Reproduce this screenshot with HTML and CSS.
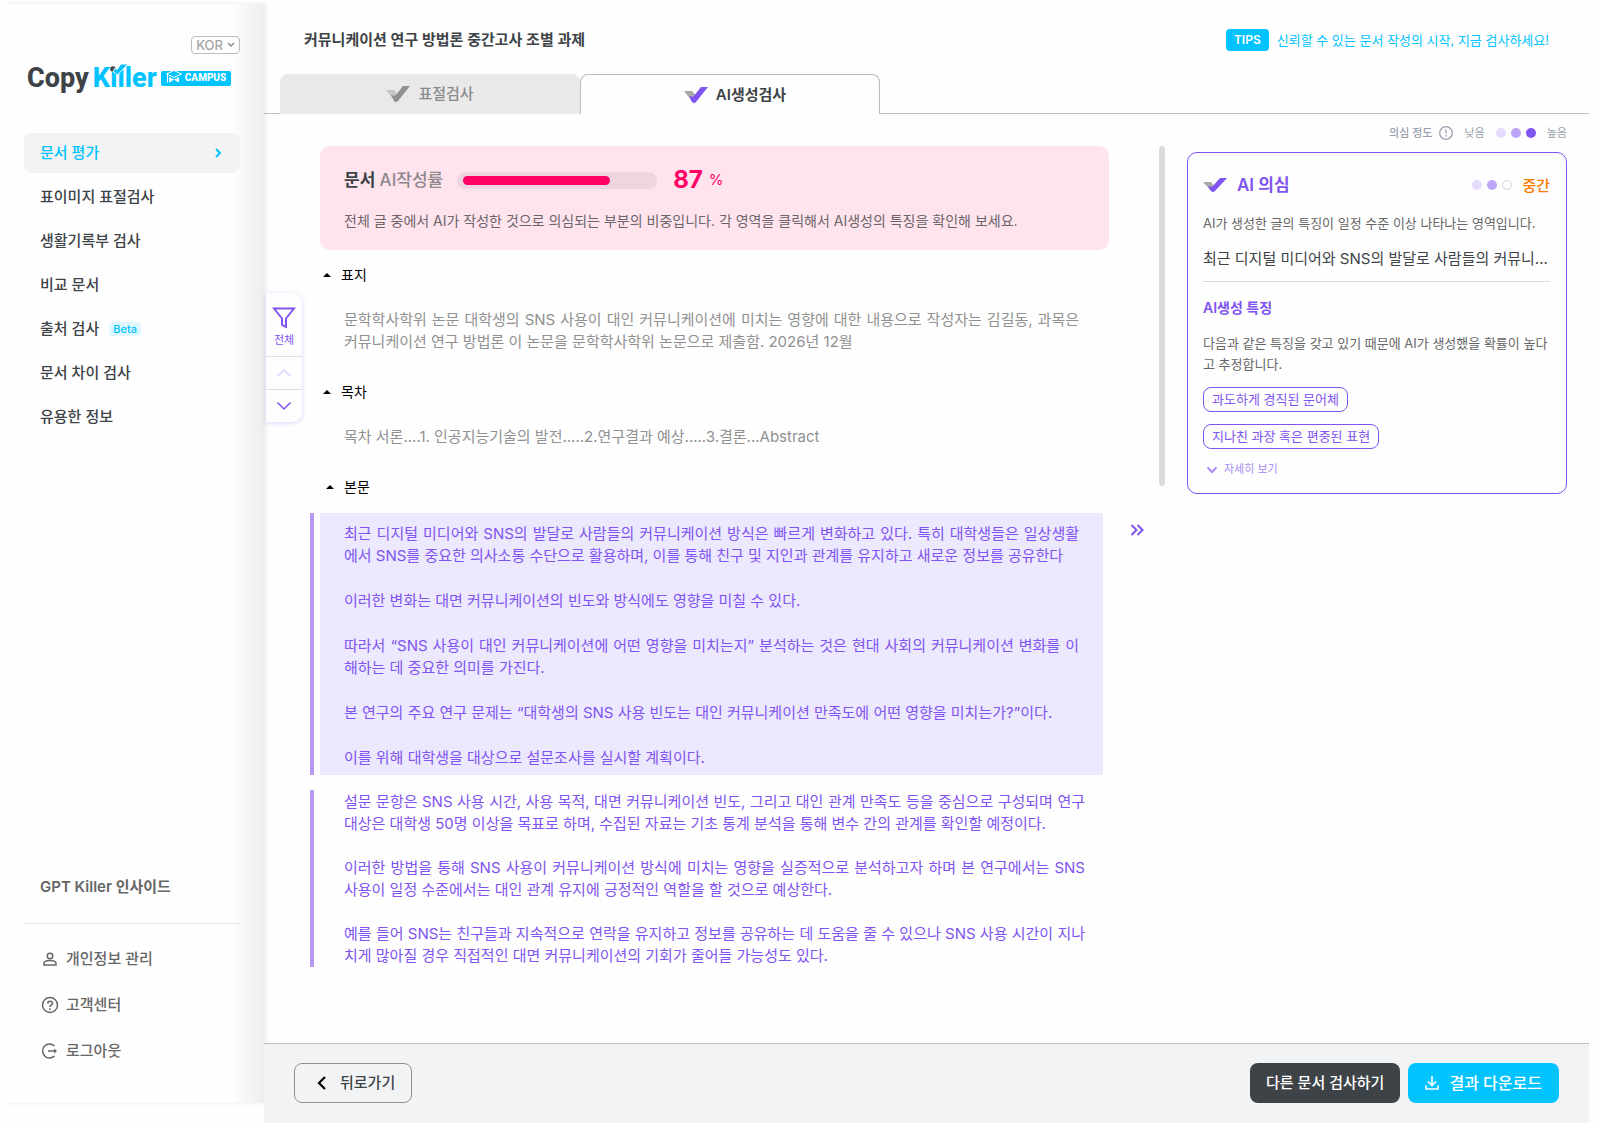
FILE: index.html
```
<!DOCTYPE html>
<html lang="ko">
<head>
    <meta charset="UTF-8">
    <meta name="viewport" content="width=device-width, initial-scale=1.0">
    <title>CopyKiller Campus - AI생성검사</title>
    <link rel="stylesheet" href="styles.css">
</head>
<body>
    <div class="app">
        <aside class="sidebar">
            <div class="lang-row">
                <button type="button" class="lang">KOR
                    <svg width="8" height="6" viewBox="0 0 8 6"><path d="M1 1l3 3 3-3" fill="none" stroke="#8b8b8d" stroke-width="1.5"/></svg>
                </button>
            </div>
            <a href="#" class="logo">
                <span class="logo-copy">Copy</span>
                <span class="logo-killer">Kıller
                    <svg class="logo-check" width="20" height="15" viewBox="0 0 20 15"><circle cx="4" cy="6" r="2.8" fill="#3d4347"/><path d="M4 8.500l4.500 3.500L19 1h-7L8 6.500 6 5z" fill="#00c3ff" stroke="#fefefe" stroke-width="1"/></svg>
                </span>
                <span class="logo-campus">
                    <svg width="16" height="18" viewBox="0 0 16 18"><path d="M8 1.500L15.500 5 8 8.500.5 5z" fill="#00c3ff" stroke="#fff"/><path d="M3 8l5 2.500L13 8v5.500l-3-1.500-2-1.500L6 12l-3 1.500z" fill="#fff"/><path d="M1.500 6v7.500" stroke="#fff"/></svg>
                    CAMPUS
                </span>
            </a>

            <nav class="menu">
                <a href="#" class="active">문서 평가
                    <svg width="7" height="10" viewBox="0 0 7 10"><path d="M1 1l4 4-4 4" fill="none" stroke="#00c3ff" stroke-width="1.9"/></svg>
                </a>
                <a href="#">표이미지 표절검사</a>
                <a href="#">생활기록부 검사</a>
                <a href="#">비교 문서</a>
                <a href="#">출처 검사 <span class="beta">Beta</span></a>
                <a href="#">문서 차이 검사</a>
                <a href="#">유용한 정보</a>
            </nav>

            <div class="side-bottom">
                <a href="#" class="insight">GPT Killer 인사이드</a>
                <a href="#">
                    <svg width="18" height="18" viewBox="0 0 18 18" fill="none" stroke="#666" stroke-width="1.5"><circle cx="9" cy="6" r="2.700"/><path d="M3 15v-1.500c0-2 3-3 6-3s6 1 6 3V15z"/></svg>
                    개인정보 관리
                </a>
                <a href="#">
                    <svg width="18" height="18" viewBox="0 0 18 18" fill="none" stroke="#666" stroke-width="1.5"><circle cx="9" cy="9" r="7.500"/><path d="M6.700 7.500c0-3 4.800-3 4.800-.3C11.500 8.900 9 9 9 11M9 12.300v1.600"/></svg>
                    고객센터
                </a>
                <a href="#">
                    <svg width="18" height="18" viewBox="0 0 18 18" fill="none" stroke="#666" stroke-width="1.5"><path d="M13.500 4A7 7 0 1 0 13.500 14M7 9h8"/><path d="M13 6.500L16 9l-3 2.500z" fill="#666" stroke="none"/></svg>
                    로그아웃
                </a>
            </div>
        </aside>

        <main class="main">
            <header class="top">
                <h1>커뮤니케이션 연구 방법론 중간고사 조별 과제</h1>
                <p class="tips"><span class="tips-badge">TIPS</span> 신뢰할 수 있는 문서 작성의 시작, 지금 검사하세요!</p>
            </header>

            <div class="tabs">
                <button type="button" class="tab">
                    <svg width="24" height="16" viewBox="0 0 24 16"><path d="M0 4h8l4 5-4 5z" fill="#c4c4c4"/><path d="M5 9l4 1 8-10h7L12 15q-2 2-4 0z" fill="#909092"/></svg>
                    표절검사
                </button>
                <button type="button" class="tab selected">
                    <svg width="24" height="16" viewBox="0 0 24 16"><path d="M0 4h8l4 5-4 5z" fill="#a8a8a8"/><path d="M5 9l4 1 8-10h7L12 15q-2 2-4 0z" fill="#8054f0"/></svg>
                    AI생성검사
                </button>
            </div>

            <div class="content">
                <div class="filter">
                    <button type="button" class="filter-all">
                        <svg width="24" height="22" viewBox="0 0 24 22"><path d="M2 1.500h20l-8 10V20l-4-2v-6.500z" fill="none" stroke="#8054f0" stroke-width="2"/></svg>
                        전체
                    </button>
                    <button type="button" aria-label="이전"><svg width="16" height="10" viewBox="0 0 16 10"><path d="M1.500 8.500L8 2l6.500 6.500" fill="none" stroke="#dcd2fb" stroke-width="1.5"/></svg></button>
                    <button type="button" aria-label="다음"><svg width="16" height="10" viewBox="0 0 16 10"><path d="M1.500 1.500L8 8l6.500-6.500" fill="none" stroke="#8054f0" stroke-width="1.5"/></svg></button>
                </div>

                <section class="document">
                    <div class="rate">
                        <div class="rate-row">
                            <h2>문서 <span>AI작성률</span></h2>
                            <div class="bar"><div class="bar-fill" style="width: 78%"></div></div>
                            <p class="percent"><strong>87</strong> <span>%</span></p>
                        </div>
                        <p class="rate-desc">전체 글 중에서 AI가 작성한 것으로 의심되는 부분의 비중입니다. 각 영역을 클릭해서 AI생성의 특징을 확인해 보세요.</p>
                    </div>

                    <button type="button" class="fold"><svg width="8" height="4" viewBox="0 0 8 4"><path d="M0 4l4-4 4 4z"/></svg>표지</button>
                    <p class="plain">문학학사학위 논문 대학생의 SNS 사용이 대인 커뮤니케이션에 미치는 영향에 대한 내용으로 작성자는 김길동, 과목은 커뮤니케이션 연구 방법론 이 논문을 문학학사학위 논문으로 제출함. 2026년 12월</p>

                    <button type="button" class="fold"><svg width="8" height="4" viewBox="0 0 8 4"><path d="M0 4l4-4 4 4z"/></svg>목차</button>
                    <p class="plain">목차 서론....1. 인공지능기술의 발전.....2.연구결과 예상.....3.결론...Abstract</p>

                    <button type="button" class="fold fold-body"><svg width="8" height="4" viewBox="0 0 8 4"><path d="M0 4l4-4 4 4z"/></svg>본문</button>
                    <div class="suspect">
                        <div class="suspect-text picked">
                            <p>최근 디지털 미디어와 SNS의 발달로 사람들의 커뮤니케이션 방식은 빠르게 변화하고 있다. 특히 대학생들은 일상생활에서 SNS를 중요한 의사소통 수단으로 활용하며, 이를 통해 친구 및 지인과 관계를 유지하고 새로운 정보를 공유한다</p>
                            <p>이러한 변화는 대면 커뮤니케이션의 빈도와 방식에도 영향을 미칠 수 있다.</p>
                            <p>따라서 “SNS 사용이 대인 커뮤니케이션에 어떤 영향을 미치는지” 분석하는 것은 현대 사회의 커뮤니케이션 변화를 이해하는 데 중요한 의미를 가진다.</p>
                            <p>본 연구의 주요 연구 문제는 “대학생의 SNS 사용 빈도는 대인 커뮤니케이션 만족도에 어떤 영향을 미치는가?”이다.</p>
                            <p>이를 위해 대학생을 대상으로 설문조사를 실시할 계획이다.</p>
                        </div>
                        <button type="button" class="more" aria-label="상세 열기"><svg width="14" height="12" viewBox="0 0 14 12"><path d="M1.500 1l5 5-5 5M7.500 1l5 5-5 5" fill="none" stroke="#8054f0" stroke-width="2"/></svg></button>
                    </div>
                    <div class="suspect">
                        <div class="suspect-text">
                            <p>설문 문항은 SNS 사용 시간, 사용 목적, 대면 커뮤니케이션 빈도, 그리고 대인 관계 만족도 등을 중심으로 구성되며 연구 대상은 대학생 50명 이상을 목표로 하며, 수집된 자료는 기초 통계 분석을 통해 변수 간의 관계를 확인할 예정이다.</p>
                            <p>이러한 방법을 통해 SNS 사용이 커뮤니케이션 방식에 미치는 영향을 실증적으로 분석하고자 하며 본 연구에서는 SNS 사용이 일정 수준에서는 대인 관계 유지에 긍정적인 역할을 할 것으로 예상한다.</p>
                            <p>예를 들어 SNS는 친구들과 지속적으로 연락을 유지하고 정보를 공유하는 데 도움을 줄 수 있으나 SNS 사용 시간이 지나치게 많아질 경우 직접적인 대면 커뮤니케이션의 기회가 줄어들 가능성도 있다.</p>
                        </div>
                    </div>
                </section>

                <div class="scroll"></div>

                <aside class="side-panel">
                    <div class="legend">
                        <strong>의심 정도</strong>
                        <svg width="14" height="14" viewBox="0 0 14 14" fill="none" stroke="#9a9fae" stroke-width="1.3"><circle cx="7" cy="7" r="6.300"/><path d="M7 3.500v4M7 9v1.500"/></svg>
                        <span class="low">낮음</span>
                        <span class="dots"><i class="dot light"></i><i class="dot mid"></i><i class="dot full"></i></span>
                        <span>높음</span>
                    </div>
                    <div class="card">
                        <div class="card-head">
                            <svg width="24" height="14" viewBox="0 0 24 14"><path d="M0 4h8l4 5-4 4z" fill="#a8a8a8"/><path d="M5 8l4 1 8-9h7L12 13q-2 2-4 0z" fill="#8054f0"/></svg>
                            <h2>AI 의심</h2>
                            <span class="dots"><i class="dot light"></i><i class="dot mid"></i><i class="dot empty"></i></span>
                            <strong class="level">중간</strong>
                        </div>
                        <p>AI가 생성한 글의 특징이 일정 수준 이상 나타나는 영역입니다.</p>
                        <p class="quote">최근 디지털 미디어와 SNS의 발달로 사람들의 커뮤니...</p>
                        <h3>AI생성 특징</h3>
                        <p>다음과 같은 특징을 갖고 있기 때문에 AI가 생성했을 확률이 높다고 추정합니다.</p>
                        <span class="tag">과도하게 경직된 문어체</span>
                        <span class="tag">지나친 과장 혹은 편중된 표현</span>
                        <button type="button" class="detail"><svg width="12" height="8" viewBox="0 0 12 8"><path d="M1.500 1.500L6 6l4.500-4.500" fill="none" stroke="#a78cf5" stroke-width="2"/></svg>자세히 보기</button>
                    </div>
                </aside>
            </div>

            <footer class="footer">
                <button type="button" class="btn back"><svg width="9" height="14" viewBox="0 0 9 14"><path d="M8 1L2 7l6 6" fill="none" stroke="#000" stroke-width="2.2"/></svg>뒤로가기</button>
                <button type="button" class="btn dark">다른 문서 검사하기</button>
                <button type="button" class="btn download"><svg width="14" height="14" viewBox="0 0 14 14"><path d="M7 0v9M3 5.500l4 4 4-4M1 9.500V13h12V9.500" fill="none" stroke="#fff" stroke-width="1.6"/></svg>결과 다운로드</button>
            </footer>
        </main>
    </div>
</body>
</html>
```

FILE: styles.css
```
* {
    box-sizing: border-box;
}

body {
    margin: 0;
    font-family: Inter, "Noto Sans CJK KR", sans-serif;
    font-size: 15px;
    line-height: 22px;
    color: #3d4347;
    background: #fefefe;
}

h1, h2, h3, p {
    margin: 0;
}

a {
    color: inherit;
    text-decoration: none;
}

button {
    font: inherit;
    color: inherit;
    background: none;
    border: none;
    padding: 0;
    cursor: pointer;
}

svg {
    flex: none;
}

.app {
    display: flex;
    min-height: 100vh;
    padding-right: 11px;
}

/* Sidebar */
.sidebar {
    display: flex;
    flex-direction: column;
    width: 260px;
    flex: none;
    margin: 4px 0 20px 4px;
    padding: 32px 24px 0 20px;
    background: linear-gradient(to right, #fefefe 88%, #ededed);
    box-shadow: 2px 0 4px rgba(0, 0, 0, 0.08);
}

.lang-row {
    display: flex;
    justify-content: flex-end;
}

.lang {
    display: flex;
    align-items: center;
    gap: 4px;
    height: 18px;
    padding: 0 4px;
    border: 1px solid #bdbdbd;
    border-radius: 4px;
    font-size: 13px;
    font-weight: 500;
    color: #a5a5a7;
}

.logo {
    display: flex;
    align-items: center;
    gap: 4px;
    height: 32px;
    margin: 8px 0 39px 3px;
    font-family: Roboto, sans-serif;
    font-size: 27px;
    font-weight: 800;
    line-height: 32px;
}

.logo-killer {
    position: relative;
    color: #00c3ff;
}

.logo-check {
    position: absolute;
    left: 16px;
    top: 1px;
}

.logo-campus {
    display: flex;
    align-items: center;
    gap: 3px;
    height: 15px;
    padding: 0 5px;
    border-radius: 2px;
    background: #00c3ff;
    color: #fff;
    font-size: 10px;
}

.menu {
    display: flex;
    flex-direction: column;
    gap: 4px;
}

.menu a {
    display: flex;
    align-items: center;
    height: 40px;
    padding: 0 18px 0 16px;
    border-radius: 8px;
    font-weight: 500;
}

.menu .active {
    justify-content: space-between;
    background: #f3f3f3;
    color: #00c3ff;
}

.beta {
    margin-left: 10px;
    padding: 0 4px;
    border-radius: 4px;
    background: #dff7ff;
    color: #00c3ff;
    font-size: 11px;
    line-height: 14px;
}

.side-bottom {
    display: flex;
    flex-direction: column;
    gap: 24px;
    margin-top: auto;
    padding-bottom: 41px;
    font-weight: 500;
    color: #666;
}

.side-bottom a {
    display: flex;
    align-items: center;
    gap: 7px;
    padding-left: 17px;
}

.side-bottom .insight {
    padding: 0 0 25px 16px;
    border-bottom: 1px solid #e6e6e6;
    font-weight: 600;
}

/* Header and tabs */
.main {
    display: flex;
    flex-direction: column;
    flex: 1;
    min-width: 0;
}

.top {
    display: flex;
    justify-content: space-between;
    align-items: center;
    height: 74px;
    padding: 6px 40px 0 40px;
}

.top h1 {
    font-size: 15px;
    font-weight: 600;
}

.tips {
    display: flex;
    align-items: center;
    gap: 8px;
    font-size: 13px;
    color: #00c3ff;
}

.tips-badge {
    padding: 0 8px;
    border-radius: 4px;
    background: #00c3ff;
    color: #fff;
    font-size: 12px;
    font-weight: 600;
}

.tabs {
    display: flex;
    height: 40px;
    padding-left: 16px;
    border-bottom: 1px solid #bdbdbd;
}

.tab {
    display: flex;
    justify-content: center;
    align-items: center;
    gap: 8px;
    width: 300px;
    height: 40px;
    border-radius: 8px 8px 0 0;
    background: #e9e9ea;
    color: #8b8b8d;
    font-weight: 500;
}

.tab.selected {
    padding-left: 10px;
    border: 1px solid #bdbdbd;
    border-bottom: none;
    background: #fefefe;
    color: #3d4347;
    font-weight: 600;
}

/* Content */
.content {
    position: relative;
    display: flex;
    flex: 1;
    padding: 0 22px 0 46px;
}

.filter {
    position: absolute;
    left: 2px;
    top: 179px;
    display: flex;
    flex-direction: column;
    width: 36px;
    border-radius: 0 10px 10px 0;
    background: #fefefe;
    box-shadow: 0 1px 5px rgba(128, 84, 240, 0.25);
}

.filter button {
    height: 33px;
    border-top: 1px solid #e0e0e0;
}

.filter .filter-all {
    display: flex;
    flex-direction: column;
    align-items: center;
    height: 63px;
    padding-top: 14px;
    border-top: none;
    font-size: 11px;
    color: #8054f0;
}

.document {
    flex: 1;
    min-width: 0;
    padding: 32px 0 42px;
}

.rate {
    margin: 0 50px 0 10px;
    padding: 20px 24px 18px;
    border-radius: 10px;
    background: #ffe4ee;
}

.rate-row {
    display: flex;
    align-items: center;
    height: 28px;
    margin-bottom: 16px;
}

.rate h2 {
    font-size: 17px;
    font-weight: 600;
}

.rate h2 span {
    color: #8e878b;
    font-weight: 500;
}

.bar {
    width: 200px;
    height: 17px;
    margin: 0 16px 0 14px;
    padding: 4px 6px;
    border-radius: 9px;
    background: #edd6df;
}

.bar-fill {
    height: 9px;
    border-radius: 5px;
    background: #ff0066;
}

.percent {
    display: flex;
    align-items: center;
    gap: 6px;
    color: #ff0066;
}

.percent strong {
    font-size: 24px;
}

.rate-desc {
    font-size: 14px;
    color: #6b6469;
}

.fold {
    display: flex;
    align-items: center;
    gap: 10px;
    height: 22px;
    margin: 14px 0 23px 13px;
    font-size: 14px;
    color: #000;
}

.fold-body {
    margin-left: 16px;
    margin-bottom: 15px;
}

.plain {
    margin: 0 80px 28px 34px;
    color: #919191;
    text-align: justify;
}

.suspect {
    display: flex;
    margin-bottom: 15px;
    border-left: 4px solid #b89bf0;
}

.suspect-text {
    flex: 1;
    margin-left: 6px;
    margin-right: 56px;
    padding: 1px 18px 0 24px;
    color: #8054f0;
    text-align: justify;
}

.suspect-text p + p {
    margin-top: 22px;
}

.suspect-text.picked {
    margin-right: 0;
    padding: 10px 24px 6px;
    background: #ece8fd;
}

.picked p + p {
    margin-top: 23px;
}

.more {
    align-self: flex-start;
    width: 56px;
    height: 36px;
    padding-left: 12px;
}

.scroll {
    width: 6px;
    height: 340px;
    margin: 32px 22px 0 0;
    border-radius: 3px;
    background: #dbdbdb;
}

/* Result panel */
.side-panel {
    width: 380px;
    flex: none;
}

.legend {
    display: flex;
    justify-content: flex-end;
    align-items: center;
    gap: 6px;
    height: 38px;
    font-size: 11px;
    color: #9a9fae;
}

.legend strong {
    font-weight: 500;
}

.legend .low {
    margin-left: 6px;
}

.legend .dots {
    margin: 0 5px;
}

.dots {
    display: flex;
    gap: 5px;
}

.dot {
    width: 10px;
    height: 10px;
    border-radius: 50%;
}

.dot.light {
    background: #e6dcfd;
}

.dot.mid {
    background: #bda5f8;
}

.dot.full {
    background: #8054f0;
}

.dot.empty {
    border: 1px solid #d8d8d8;
}

.card {
    padding: 20px 16px 13px 15px;
    border: 1px solid #8054f0;
    border-radius: 10px;
    font-size: 13px;
    line-height: 21px;
    color: #666;
}

.card-head {
    display: flex;
    align-items: center;
    gap: 10px;
    height: 24px;
    margin-bottom: 16px;
}

.card-head h2 {
    margin-right: auto;
    font-size: 17px;
    font-weight: 600;
    color: #8054f0;
}

.level {
    font-size: 15px;
    font-weight: 500;
    color: #ff7a00;
}

.card .quote {
    margin: 14px 0 15px;
    padding-bottom: 12px;
    border-bottom: 1px solid #dbdbdb;
    font-size: 15px;
    color: #3d4347;
}

.card h3 {
    margin-bottom: 15px;
    font-size: 14px;
    font-weight: 600;
    color: #8054f0;
}

.tag {
    display: block;
    width: fit-content;
    margin-top: 12px;
    padding: 1px 8px;
    border: 1px solid #8054f0;
    border-radius: 8px;
    color: #8054f0;
}

.detail {
    display: flex;
    align-items: center;
    gap: 6px;
    margin: 10px 0 0 3px;
    font-size: 11px;
    color: #a78cf5;
}

/* Footer */
.footer {
    display: flex;
    align-items: center;
    gap: 8px;
    height: 80px;
    padding: 0 30px 2px;
    border-top: 1px solid #bdbdbd;
    background: #f2f3f5;
}

.btn {
    display: flex;
    align-items: center;
    gap: 10px;
    height: 40px;
    padding: 0 16px;
    border-radius: 8px;
    font-size: 15px;
    font-weight: 500;
}

.back {
    margin-right: auto;
    padding: 0 16px 0 22px;
    border: 1px solid #919191;
    gap: 14px;
}

.dark {
    background: #3d4347;
    color: #fff;
}

.download {
    padding: 0 17px;
    background: #00c3ff;
    color: #fff;
    font-size: 16px;
}
```
